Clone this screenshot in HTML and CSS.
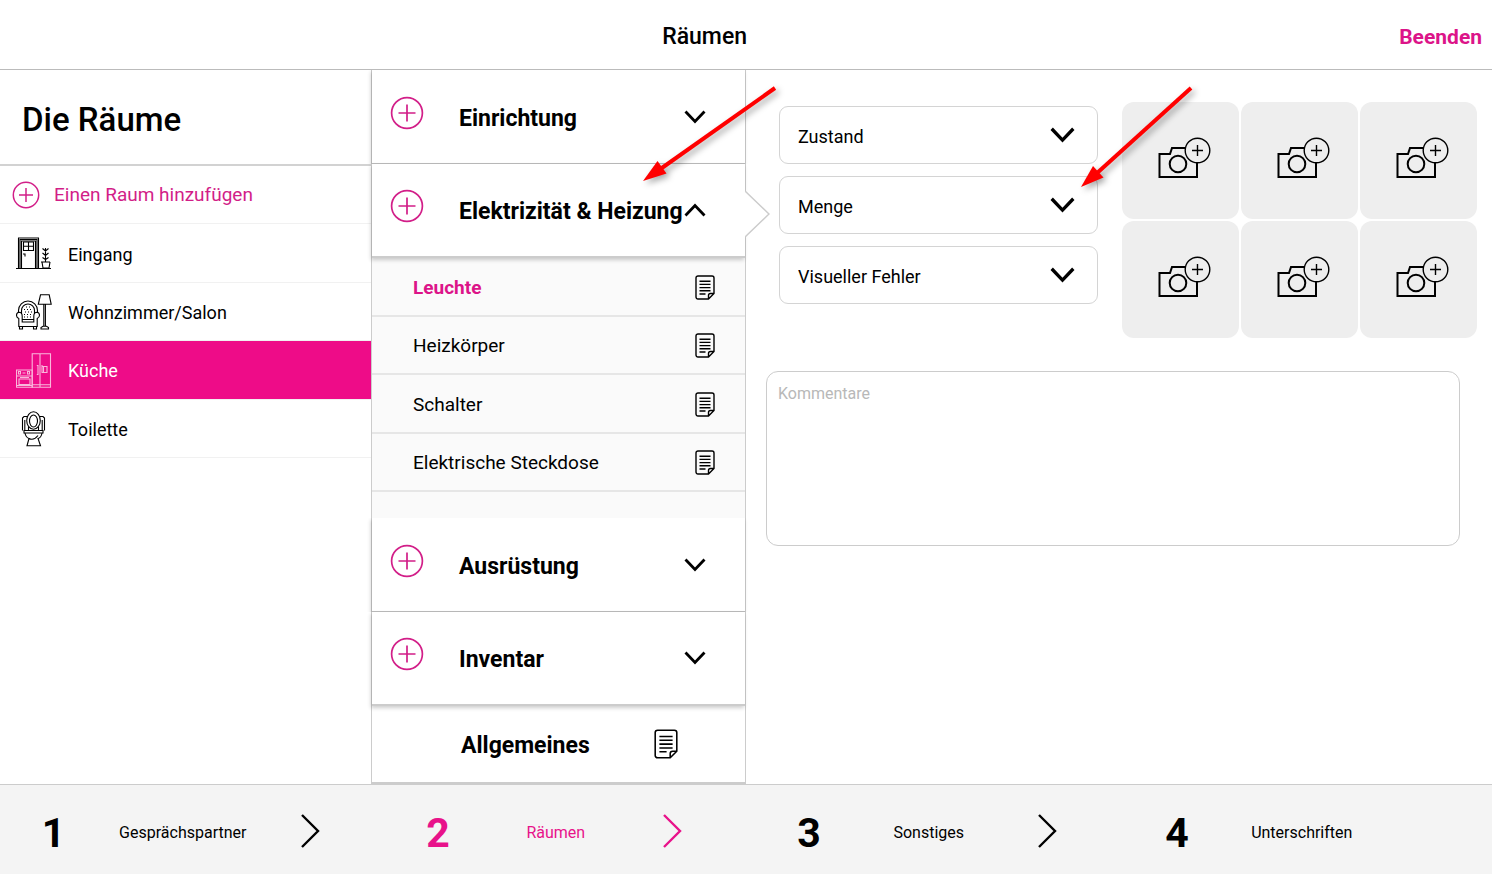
FILE: index.html
```html
<!DOCTYPE html>
<html lang="de">
<head>
  <meta charset="UTF-8">
  <meta name="viewport" content="width=device-width, initial-scale=1.0">
  <title>Räumen</title>
  <link rel="stylesheet" href="styles.css">
</head>
<body>
  <svg class="sprite" aria-hidden="true">
    <symbol id="plus" viewBox="0 0 34 34"><circle cx="17" cy="17" r="15.4"/><path d="M17 8.5v17M8.5 17h17"/></symbol>
    <symbol id="down" viewBox="0 0 22 14"><path d="M1.5 1.5 11 11.5l9.5-10"/></symbol>
    <symbol id="up" viewBox="0 0 22 14"><path d="M1.5 12.5 11 2.5l9.5 10"/></symbol>
    <symbol id="next" viewBox="0 0 20 36"><path d="M2 2 18 18 2 34"/></symbol>
    <symbol id="note" viewBox="0 0 20 25">
      <path d="M13.5 24H3a2 2 0 0 1-2-2V3a2 2 0 0 1 2-2h14a2 2 0 0 1 2 2v15.500zM13.500 24v-3.500a2 2 0 0 1 2-2H19M4.500 6.200h11M4.500 9.400h11M4.500 12.600h11M4.500 15.800h11M4.500 19h6"/>
    </symbol>
    <symbol id="camera" viewBox="0 0 53 42">
      <path d="M27.500 11H14l-2 6H1.500v23H39V26"/><circle cx="20" cy="27" r="8.300"/>
      <g stroke-width="1.400"><circle cx="39.500" cy="13.500" r="12.300"/><path d="M39.500 8v11M34 13.500h11"/></g>
    </symbol>
  </svg>

  <header class="topbar">
    <h1>Räumen</h1>
    <button class="quit" type="button">Beenden</button>
  </header>

  <main class="columns">
    <nav class="rooms">
      <h2>Die Räume</h2>
      <ul>
        <li><button class="add" type="button"><svg class="add-icon"><use href="#plus"/></svg>Einen Raum hinzufügen</button></li>
        <li><button type="button">
          <svg class="room-icon" viewBox="0 0 36 36">
            <path d="M0 32.500h35M2.500 32V2h20v30M5.500 32V5h14v27M4 32V3.500h17V32"/>
            <path d="M7.500 6h10v8.500h-10zM12.500 6v8.500M7.500 10.200h10M7 18h2v2.500"/>
            <path d="M25 26h9M26 26l1 6h6l1-6M29.500 26V12M26.500 12.500l3 2.500 3-2.500M26.500 17l3 2.500 3-2.500M26.500 21.500l3 2 3-2"/>
          </svg>Eingang</button></li>
        <li><button type="button">
          <svg class="room-icon" viewBox="0 0 36 36">
            <path d="M24.500.8h8.700l2 9.500H22.300zM27.800 10.500V32M29.400 10.500V32M25 35v-1.500l2-1.200h3.500l2 1.200V35z"/>
            <path d="M2.500 18v-1.500a9.500 9.500 0 0 1 19 0V18M5.500 20v-3.500a6.500 6.500 0 0 1 13 0V20"/>
            <path d="M2.800 32.500V24.500C-.5 23 0 18.500 3 18.200c2.800 0 3.200 2 3.200 4V28h11.600v-5.800c0-2 .5-4 3.200-4 3 .3 3.500 4.800.2 6.300v8zM6.200 25.500h11.600M3.500 33v2h3v-2M17.500 33v2h3v-2"/>
            <path stroke-dasharray="1 2" d="M8 15.500h8M9 18h7M8 20.500h8M8 23h8M10 13h5"/>
          </svg>Wohnzimmer/Salon</button></li>
        <li><button class="active" type="button">
          <svg class="room-icon" viewBox="0 0 36 36">
            <path d="M16.200.8h18.300V34.200H16.200zM24 .8v33.400M16.200 31.700h18.300M22 12v10M26 12v8M20.800 12.500H22v9h-1.200M26 13.500h5v6h-5M27.500 13.500v6"/>
            <path d="M.5 17h15.700v17.200H.5zM.5 23h15.700M3 26h11v5.500H3zM4 24.500h9M.5 32.500h15.700"/>
            <path d="M2.500 18.500h2v2.500h-2zM6.500 20h3M11.500 18.500h2v2.500h-2z"/>
          </svg>Küche</button></li>
        <li><button type="button">
          <svg class="room-icon" viewBox="0 0 36 36">
            <ellipse cx="17.500" cy="9.500" rx="6.800" ry="8.700"/><ellipse cx="17.500" cy="10" rx="4" ry="6"/>
            <path d="M11 5.500H8L6.500 7v12.500M24 5.500h3L28.500 7v12.500M8.800 9v10.500M26.200 9v10.500M8 19.500h19V22H8zM12.500 16v3.500M22.500 16v3.500"/>
            <path d="M9 22c.5 3 2.500 5 4 5.500L11 34.800h13.500L22 27.500c2-.5 3.500-2.500 4-5.500M13 27.500c3 1.500 6 1 9-3"/>
          </svg>Toilette</button></li>
      </ul>
    </nav>

    <section class="categories">
      <div class="category">
        <button class="plus" type="button" aria-label="Einrichtung hinzufügen"><svg><use href="#plus"/></svg></button>
        <button class="toggle" type="button"><span>Einrichtung</span><svg><use href="#down"/></svg></button>
      </div>
      <div class="category open">
        <button class="plus" type="button" aria-label="Elektrizität &amp; Heizung hinzufügen"><svg><use href="#plus"/></svg></button>
        <button class="toggle" type="button" aria-expanded="true"><span>Elektrizität &amp; Heizung</span><svg><use href="#up"/></svg></button>
        <svg class="pointer" viewBox="0 0 25 48"><path d="M0 1 24 24 0 47"/></svg>
        <svg class="hint hint-category" viewBox="0 0 134 96"><path class="shaft" d="M132 2 16 84"/><path class="head" d="M0 95 14.500 75 23.500 87.500z"/></svg>
      </div>
      <ul class="items">
        <li><button class="active" type="button">Leuchte<svg><use href="#note"/></svg></button></li>
        <li><button type="button">Heizkörper<svg><use href="#note"/></svg></button></li>
        <li><button type="button">Schalter<svg><use href="#note"/></svg></button></li>
        <li><button type="button">Elektrische Steckdose<svg><use href="#note"/></svg></button></li>
      </ul>
      <div class="category">
        <button class="plus" type="button" aria-label="Ausrüstung hinzufügen"><svg><use href="#plus"/></svg></button>
        <button class="toggle" type="button"><span>Ausrüstung</span><svg><use href="#down"/></svg></button>
      </div>
      <div class="category last">
        <button class="plus" type="button" aria-label="Inventar hinzufügen"><svg><use href="#plus"/></svg></button>
        <button class="toggle" type="button"><span>Inventar</span><svg><use href="#down"/></svg></button>
      </div>
      <button class="general" type="button"><span>Allgemeines</span><svg><use href="#note"/></svg></button>
    </section>

    <form class="details">
      <div class="fields">
        <div class="field">
          <select aria-label="Zustand"><option>Zustand</option></select>
          <svg class="caret"><use href="#down"/></svg>
        </div>
        <div class="field">
          <select aria-label="Menge"><option>Menge</option></select>
          <svg class="caret"><use href="#down"/></svg>
          <svg class="hint hint-field" viewBox="0 0 112 102"><path class="shaft" d="M110 2 15 88"/><path class="head" d="M0 101 12 80 22.500 91.500z"/></svg>
        </div>
        <div class="field">
          <select aria-label="Visueller Fehler"><option>Visueller Fehler</option></select>
          <svg class="caret"><use href="#down"/></svg>
        </div>
      </div>
      <div class="photos">
        <button type="button" aria-label="Foto 1"><svg><use href="#camera"/></svg></button>
        <button type="button" aria-label="Foto 2"><svg><use href="#camera"/></svg></button>
        <button type="button" aria-label="Foto 3"><svg><use href="#camera"/></svg></button>
        <button type="button" aria-label="Foto 4"><svg><use href="#camera"/></svg></button>
        <button type="button" aria-label="Foto 5"><svg><use href="#camera"/></svg></button>
        <button type="button" aria-label="Foto 6"><svg><use href="#camera"/></svg></button>
      </div>
      <textarea aria-label="Kommentare" placeholder="Kommentare"></textarea>
    </form>
  </main>

  <footer class="steps">
    <a href="#partner"><b>1</b><span>Gesprächspartner</span><svg><use href="#next"/></svg></a>
    <a class="current" href="#raeumen"><b>2</b><span>Räumen</span><svg><use href="#next"/></svg></a>
    <a href="#sonstiges"><b>3</b><span>Sonstiges</span><svg><use href="#next"/></svg></a>
    <a href="#unterschriften"><b>4</b><span>Unterschriften</span><svg></svg></a>
  </footer>
</body>
</html>
```
FILE: styles.css
```css
* {
  box-sizing: border-box;
}
body {
  margin: 0;
  min-height: 100vh;
  display: flex;
  flex-direction: column;
  background: #fff;
  color: #000;
  font-family: Roboto, "Liberation Sans", sans-serif;
  font-size: 18px;
}
button, select, textarea {
  font: inherit;
  color: inherit;
  background: none;
  border: none;
  padding: 0;
  margin: 0;
}
button {
  cursor: pointer;
  text-align: left;
}
ul {
  list-style: none;
  margin: 0;
  padding: 0;
}
svg {
  flex: none;
  fill: none;
  stroke: currentColor;
}
.sprite {
  position: absolute;
  width: 0;
  height: 0;
}

.topbar {
  display: flex;
  align-items: center;
  height: 70px;
  padding: 4px 10px 0;
  border-bottom: 1px solid #bbb;
}
.topbar h1 {
  flex: 1;
  margin: 0;
  text-align: center;
  font-size: 23px;
  font-weight: 500;
}
.quit {
  color: #dc1489;
  font-size: 21px;
  font-weight: 700;
}

.columns {
  flex: 1;
  display: grid;
  grid-template-columns: minmax(0, 371fr) minmax(0, 375fr) minmax(0, 746fr);
}

.rooms h2 {
  display: flex;
  align-items: center;
  height: 96px;
  margin: 0;
  padding: 4px 22px 0;
  border-bottom: 2px solid #d2d2d2;
  font-size: 33px;
  font-weight: 500;
}
.rooms ul {
  display: grid;
  grid-auto-rows: 1fr;
  height: 292px;
}
.rooms li {
  border-bottom: 1px solid #f1f1f1;
}
.rooms button {
  display: flex;
  align-items: center;
  gap: 16px;
  width: 100%;
  height: 100%;
  padding: 2px 16px 0;
}
.rooms .add {
  gap: 14px;
  padding: 0 12px;
  color: #d21e88;
  font-size: 19px;
}
.rooms .active {
  background: #ee0c88;
  color: #fff;
}
.room-icon {
  width: 36px;
  height: 36px;
  stroke-width: 1.1;
}
.active .room-icon {
  opacity: .7;
}
.add-icon {
  width: 28px;
  height: 28px;
  stroke-width: 1.8;
}

.categories {
  display: flex;
  flex-direction: column;
  border: solid #ccc;
  border-width: 0 1px 2px;
}
.category {
  position: relative;
  display: flex;
  align-items: center;
  gap: 35px;
  height: 94px;
  padding: 0 39px 0 18px;
  background: #fff;
  border-bottom: 1px solid #bbb;
  box-shadow: -1px 2px 4px rgba(0, 0, 0, .2);
  clip-path: inset(0 -60px 0 -6px);
}
.category.open, .category.last {
  border-bottom: 2px solid #ccc;
  clip-path: inset(-100px -60px -8px -6px);
  z-index: 1;
}
.plus {
  color: #d21e88;
  padding-bottom: 8px;
}
.plus svg {
  display: block;
  width: 34px;
  height: 34px;
  stroke-width: 1.7;
}
.toggle {
  flex: 1;
  display: flex;
  align-items: center;
  justify-content: space-between;
  font-size: 23px;
  font-weight: 700;
  white-space: nowrap;
}
.toggle span, .general span {
  padding-top: 3px;
}
.toggle svg {
  width: 22px;
  height: 14px;
  stroke-width: 2.8;
}
.pointer {
  position: absolute;
  left: 100%;
  top: 26px;
  width: 25px;
  height: 48px;
  fill: #fff;
  stroke: #ccc;
  stroke-width: 1.5;
}
.items {
  display: grid;
  grid-auto-rows: 1fr;
  height: 260px;
  padding-bottom: 26px;
  background: #fafafa;
  font-size: 19px;
}
.items li {
  border-bottom: 2px solid #e6e6e6;
}
.items button {
  display: flex;
  align-items: center;
  justify-content: space-between;
  width: 100%;
  height: 100%;
  padding: 2px 30px 0 41px;
}
.items .active {
  color: #dc1489;
  font-weight: 700;
}
.items svg {
  width: 20px;
  height: 25px;
  color: #000;
  stroke-width: 1.4;
}
.general {
  flex: 1;
  display: flex;
  align-items: center;
  gap: 64px;
  padding-left: 89px;
  font-size: 23px;
  font-weight: 700;
}
.general svg {
  width: 24px;
  height: 30px;
  stroke-width: 1.3;
}

.details {
  display: grid;
  grid-template-columns: 319fr 355fr;
  align-content: start;
  column-gap: 24px;
  row-gap: 33px;
  padding: 32px 15px 0 33px;
}
.fields {
  display: flex;
  flex-direction: column;
  gap: 12px;
  padding-top: 4px;
}
.field {
  position: relative;
}
.field select {
  display: block;
  width: 100%;
  height: 58px;
  padding: 2px 18px 0;
  border: 1px solid #d4d4d4;
  border-radius: 9px;
  background: #fff;
  appearance: none;
}
.caret {
  position: absolute;
  right: 23px;
  top: 21px;
  width: 25px;
  height: 16px;
  stroke-width: 2.9;
  pointer-events: none;
}
.photos {
  display: grid;
  grid-template-columns: repeat(3, 1fr);
  gap: 2px;
}
.photos button {
  display: flex;
  align-items: center;
  justify-content: center;
  aspect-ratio: 1;
  padding: 0 0 6px 8px;
  border-radius: 12px;
  background: #eee;
}
.photos svg {
  width: 53px;
  height: 42px;
  stroke-width: 2;
}
.details textarea {
  grid-column: 1 / -1;
  height: 175px;
  margin: 0 17px 0 -13px;
  padding: 12px 11px;
  border: 1px solid #ccc;
  border-radius: 12px;
  font-size: 16px;
  resize: none;
}
.details textarea::placeholder {
  color: #b8b8b8;
}

/* red arrows over the open category and the amount field */
.hint {
  position: absolute;
  z-index: 2;
  overflow: visible;
  stroke: none;
  pointer-events: none;
  filter: drop-shadow(3px 3px 3px rgba(0, 0, 0, .35));
}
.hint .shaft {
  stroke: #f00;
  stroke-width: 4;
}
.hint .head {
  fill: #f00;
}
.hint-category {
  right: -32px;
  bottom: 74px;
  width: 134px;
  height: 96px;
}
.hint-field {
  right: -95px;
  bottom: 46px;
  width: 112px;
  height: 102px;
}

.steps {
  display: grid;
  grid-template-columns: repeat(4, 1fr);
  height: 90px;
  background: #f4f4f4;
  border-top: 1px solid #ccc;
}
.steps a {
  display: flex;
  align-items: center;
  justify-content: space-around;
  padding: 3px 26px 0 15px;
  color: inherit;
  font-size: 16px;
  text-decoration: none;
}
.steps b {
  padding-top: 3px;
  font-size: 41px;
}
.steps span {
  padding-top: 2px;
}
.steps svg {
  width: 20px;
  height: 36px;
  stroke-width: 2.4;
}
.steps .current {
  color: #e8128a;
}
```
